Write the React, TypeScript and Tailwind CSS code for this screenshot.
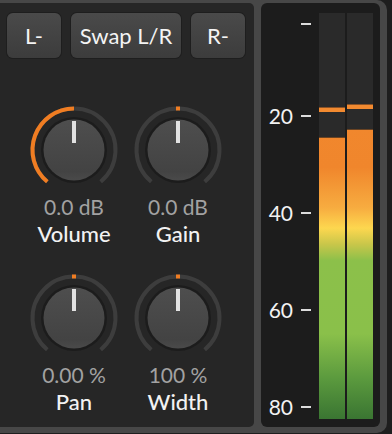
import { useId } from 'react';

type KnobProps = {
    label: string;
    value: string;
    bipolar?: boolean;
};

const CX = 52;
const CY = 48;
const R = 41.5;

function point(angle: number) {
    const rad = (angle * Math.PI) / 180;
    return `${(CX + R * Math.sin(rad)).toFixed(2)} ${(CY - R * Math.cos(rad)).toFixed(2)}`;
}

function Knob({ label, value, bipolar = true }: KnobProps) {
    const gradientId = useId();

    return (
        <div className="flex w-[104px] flex-col items-center">
            <svg width="104" height="94" viewBox="0 0 104 94">
                <defs>
                    <linearGradient id={gradientId} x1="0" y1="0" x2="0" y2="1">
                        <stop offset="0%" stopColor="#4e4e4e" />
                        <stop offset="85%" stopColor="#434343" />
                        <stop offset="100%" stopColor="#4a4a4a" />
                    </linearGradient>
                </defs>
                <path
                    d={`M ${point(-140)} A ${R} ${R} 0 1 1 ${point(140)}`}
                    fill="none"
                    stroke="#3d3d3d"
                    strokeWidth="4"
                />
                {bipolar ? (
                    <rect x="50" y="4.5" width="4" height="4" fill="#f07d22" />
                ) : (
                    <path
                        d={`M ${point(-140)} A ${R} ${R} 0 0 1 ${point(0)}`}
                        fill="none"
                        stroke="#f07d22"
                        strokeWidth="4"
                    />
                )}
                <circle cx={CX} cy={CY} r="33" fill="#1c1c1c" />
                <circle cx={CX} cy={CY} r="30.5" fill={`url(#${gradientId})`} />
                <rect x="50" y="19" width="4" height="22" fill="#e2e2e2" />
            </svg>
            <span className="h-[22px] whitespace-nowrap font-['Lato',sans-serif] text-[21px] leading-[22px] text-[#a2a2a2]">
                {value}
            </span>
            <span className="mt-[4px] h-[24px] whitespace-nowrap font-['Lato',sans-serif] text-[22px] font-medium leading-[24px] text-[#f2f2f2]">
                {label}
            </span>
        </div>
    );
}

function PanelButton({ children, wide }: { children: string; wide?: boolean }) {
    return (
        <button
            type="button"
            className={`${wide ? 'w-[110px]' : 'w-[54px]'} h-[45px] whitespace-nowrap rounded-[6px] bg-[linear-gradient(#4a4a4a,#3c3c3c)] font-['Lato',sans-serif] text-[22px] text-[#f4f4f4] shadow-[0_0_0_1px_#1e1e1e]`}
        >
            {children}
        </button>
    );
}

function MeterBar({ fillTop, peakTop }: { fillTop: number; peakTop: number }) {
    return (
        <div className="relative h-full w-[26px] bg-[linear-gradient(to_bottom,#f28a30_0%,#f0862c_38%,#f7ac40_48%,#fdd74f_53%,#c8c64a_57%,#8cc04a_61%,#8ac04a_79%,#5b9a3e_90%,#3a7532_100%)]">
            <div
                className="absolute inset-x-0 top-0 border-b border-[#6a4322] bg-[#2a2a2a]"
                style={{ height: fillTop }}
            />
            <div
                className="absolute inset-x-0 h-[5px] border-t border-[#8a5226] bg-[#f28a30]"
                style={{ top: peakTop }}
            />
        </div>
    );
}

const ticks = ['', '20', '40', '60', '80'];

export default function App() {
    return (
        <div className="h-[434px] w-[392px] overflow-hidden bg-[#1e1e1e]">
            <div className="flex h-[433px] w-[387px] gap-[7px] rounded-r-[10px] bg-[#474747] pt-[3px] pr-[7px] pb-[6px]">
                <div className="flex w-[254px] flex-col rounded-r-[5px] bg-[#262626]">
                    <div className="flex gap-[10px] pt-[10px] pl-[7px]">
                        <PanelButton>L-</PanelButton>
                        <PanelButton wide>Swap L/R</PanelButton>
                        <PanelButton>R-</PanelButton>
                    </div>
                    <div className="mt-[44px] grid grid-cols-[104px_104px] gap-y-[24px] pl-[22px]">
                        <Knob label="Volume" value="0.0 dB" bipolar={false} />
                        <Knob label="Gain" value="0.0 dB" />
                        <Knob label="Pan" value="0.00 %" />
                        <Knob label="Width" value="100 %" />
                    </div>
                </div>
                <div className="flex w-[119px] gap-[8px] rounded-[6px] bg-[#1c1c1c] pt-[10px] pr-[7px] pb-[8px]">
                    <div className="mt-[3px] flex flex-col gap-[73px]">
                        {ticks.map((tick) => (
                            <div key={tick || 'top'} className="flex h-[24px] items-center gap-[8px]">
                                <span className="w-[32px] text-right font-['Lato',sans-serif] text-[21px] leading-[24px] text-[#f2f2f2]">
                                    {tick}
                                </span>
                                <span className="h-[2px] w-[10px] bg-[#dcdcdc]" />
                            </div>
                        ))}
                    </div>
                    <div className="flex gap-[2px]">
                        <MeterBar fillTop={125} peakTop={94} />
                        <MeterBar fillTop={117} peakTop={91} />
                    </div>
                </div>
            </div>
        </div>
    );
}
